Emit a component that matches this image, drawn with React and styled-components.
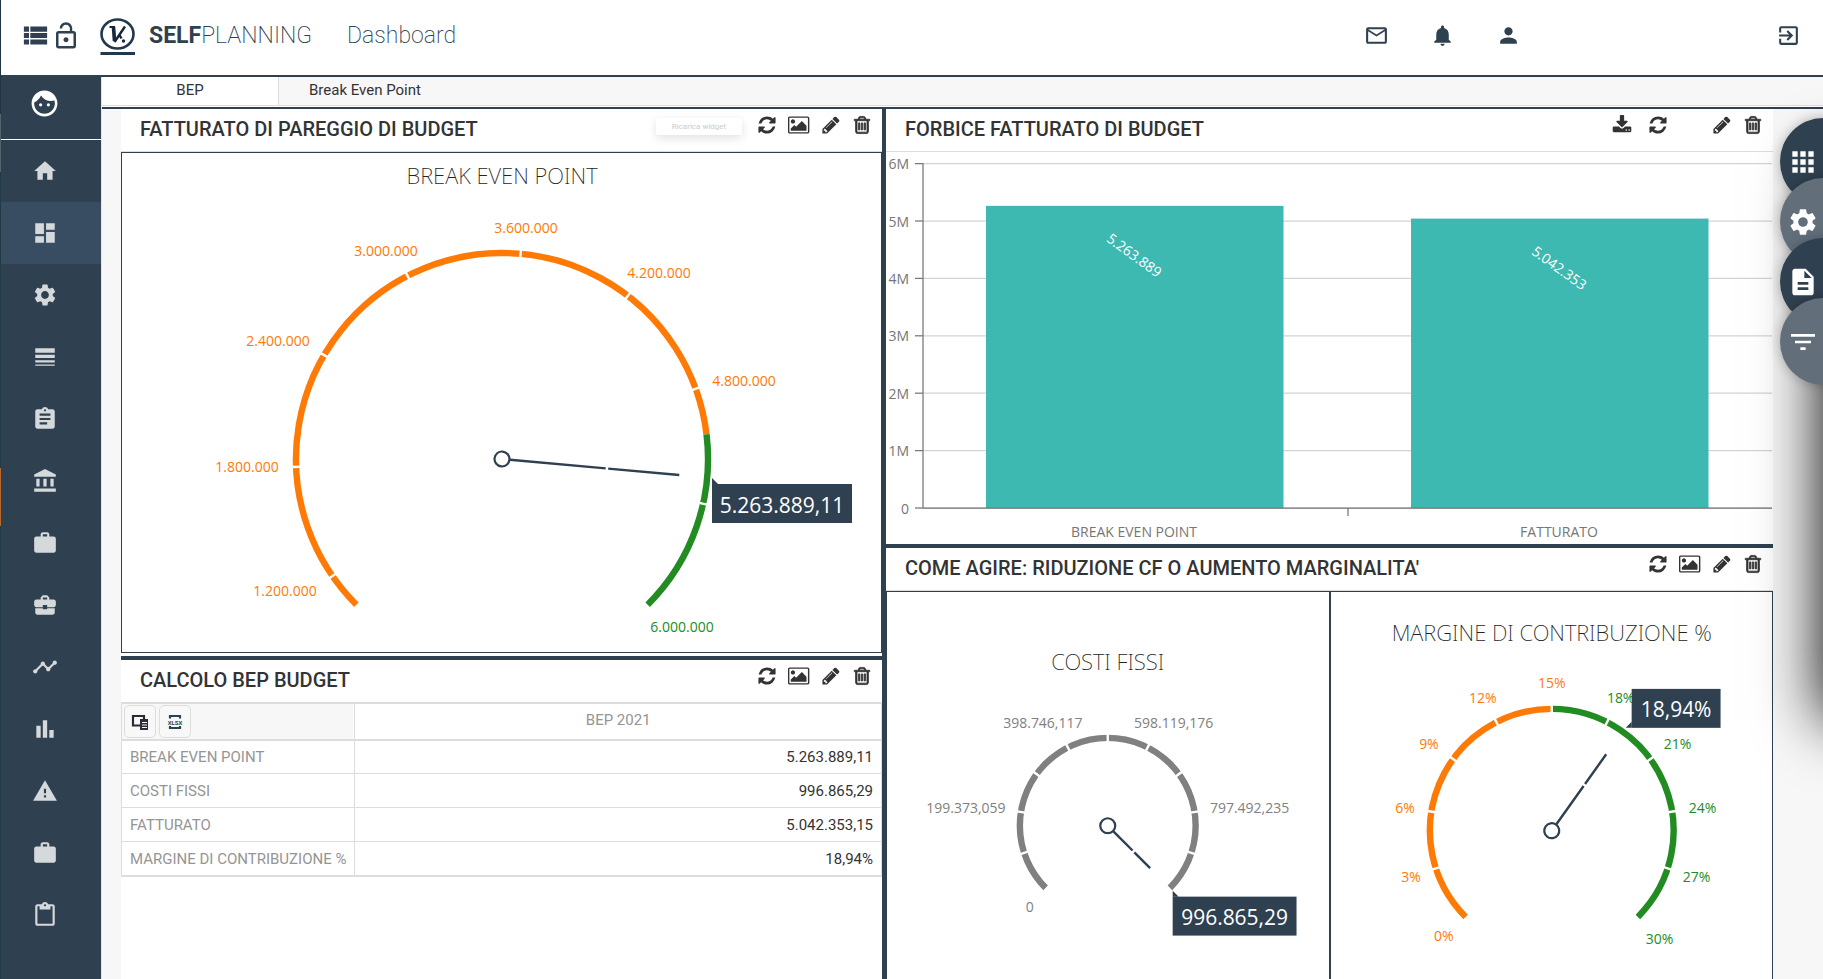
import styled, { createGlobalStyle } from "styled-components";
import {
    MdViewList, MdLockOpen, MdMailOutline, MdNotifications, MdPerson, MdExitToApp, MdFace, MdHome,
    MdDashboard, MdSettings, MdLineWeight, MdAssignment, MdAccountBalance, MdWork, MdBusinessCenter,
    MdTimeline, MdBarChart, MdWarning, MdContentPaste, MdApps, MdDescription, MdFilterList,
} from "react-icons/md";

const NAVY = "#2f4050";
const ORANGE = "#ff7a05";
const GREEN = "#228b22";
const GREY = "#808080";
const CHART_FONT = '"Open Sans", "Noto Sans", sans-serif';

const GlobalStyle = createGlobalStyle`
    * {
        box-sizing: border-box;
    }

    body {
        margin: 0;
        background: #f7f7f7;
        color: #333;
        font-family: Roboto, sans-serif;
        font-size: 15px;
    }
`;

const glyphs = {
    download: "M1344 1344q0-26-19-45t-45-19-45 19-19 45 19 45 45 19 45-19 19-45zm256 0q0-26-19-45t-45-19-45 19-19 45 19 45 45 19 45-19 19-45zm128-224v320q0 40-28 68t-68 28h-1472q-40 0-68-28t-28-68v-320q0-40 28-68t68-28h465l135 136q58 56 136 56t136-56l136-136h464q40 0 68 28t28 68zm-325-569q17 41-14 70l-448 448q-18 19-45 19t-45-19l-448-448q-31-29-14-70 17-39 59-39h256v-448q0-26 19-45t45-19h256q26 0 45 19t19 45v448h256q42 0 59 39z",
    refresh: "M1639 1056q0 5-1 7-64 268-268 434.5t-478 166.5q-146 0-282.5-55t-243.5-157l-129 129q-19 19-45 19t-45-19-19-45v-448q0-26 19-45t45-19h448q26 0 45 19t19 45-19 45l-137 137q71 66 161 102t187 36q134 0 250-65t186-179q11-17 53-117 8-23 30-23h192q13 0 22.5 9.5t9.5 22.5zm25-800v448q0 26-19 45t-45 19h-448q-26 0-45-19t-19-45 19-45l138-138q-148-137-349-137-134 0-250 65t-186 179q-11 17-53 117-8 23-30 23h-199q-13 0-22.5-9.5t-9.5-22.5v-7q65-268 270-434.5t480-166.5q146 0 284 55.5t245 156.5l130-129q19-19 45-19t45 19 19 45z",
    image: "M576 576q0 80-56 136t-136 56-136-56-56-136 56-136 136-56 136 56 56 136zm1024 384v448h-1408v-192l320-320 160 160 512-512zm96-704h-1600q-13 0-22.5 9.5t-9.5 22.5v1216q0 13 9.5 22.5t22.5 9.5h1600q13 0 22.5-9.5t9.5-22.5v-1216q0-13-9.5-22.5t-22.5-9.5zm160 32v1216q0 66-47 113t-113 47h-1600q-66 0-113-47t-47-113v-1216q0-66 47-113t113-47h1600q66 0 113 47t47 113z",
    pencil: "M491 1536l91-91-235-235-91 91v107h128v128h107zm523-928q0-22-22-22-10 0-17 7l-542 542q-7 7-7 17 0 22 22 22 10 0 17-7l542-542q7-7 7-17zm-54-192l416 416-832 832h-416v-416zm683 96q0 53-37 90l-166 166-416-416 166-165q36-38 90-38 53 0 91 38l235 234q37 39 37 91z",
    trash: "M704 736v576q0 14-9 23t-23 9h-64q-14 0-23-9t-9-23v-576q0-14 9-23t23-9h64q14 0 23 9t9 23zm256 0v576q0 14-9 23t-23 9h-64q-14 0-23-9t-9-23v-576q0-14 9-23t23-9h64q14 0 23 9t9 23zm256 0v576q0 14-9 23t-23 9h-64q-14 0-23-9t-9-23v-576q0-14 9-23t23-9h64q14 0 23 9t9 23zm128 724v-948h-896v948q0 22 7 40.5t14.5 27 10.5 8.5h832q3 0 10.5-8.5t14.5-27 7-40.5zm-672-1076h448l-48-117q-7-9-17-11h-317q-10 2-17 11zm928 32v64q0 14-9 23t-23 9h-96v948q0 83-47 143.5t-113 60.5h-832q-66 0-113-58.5t-47-141.5v-952h-96q-14 0-23-9t-9-23v-64q0-14 9-23t23-9h309l70-167q15-37 54-63t79-26h320q40 0 79 26t54 63l70 167h309q14 0 23 9t9 23z",
};

const labels = {
    download: "Scarica",
    refresh: "Ricarica widget",
    image: "Esporta immagine",
    pencil: "Modifica",
    trash: "Elimina",
};

const sidebarItems = [
    { icon: MdHome, name: "Home" },
    { icon: MdDashboard, name: "Dashboard", active: true },
    { icon: MdSettings, name: "Impostazioni" },
    { icon: MdLineWeight, name: "Righe" },
    { icon: MdAssignment, name: "Piani" },
    { icon: MdAccountBalance, name: "Banche" },
    { icon: MdWork, name: "Lavori" },
    { icon: MdBusinessCenter, name: "Aziende" },
    { icon: MdTimeline, name: "Andamento" },
    { icon: MdBarChart, name: "Grafici" },
    { icon: MdWarning, name: "Avvisi" },
    { icon: MdWork, name: "Commesse" },
    { icon: MdContentPaste, name: "Appunti" },
];

const bepRows = [
    ["BREAK EVEN POINT", "5.263.889,11"],
    ["COSTI FISSI", "996.865,29"],
    ["FATTURATO", "5.042.353,15"],
    ["MARGINE DI CONTRIBUZIONE %", "18,94%"],
];

// label coordinates are relative to the centre of the dial
const bepGauge = {
    width: 759, height: 499, cx: 380, cy: 306, radius: 209,
    title: "BREAK EVEN POINT", titleY: 22,
    ranges: [[0, 0.808, ORANGE], [0.808, 1, GREEN]],
    ticks: [0.0384, 0.1586, 0.2788, 0.399, 0.5192, 0.6394, 0.7596, 0.8798],
    value: 0.8525,
    labels: [
        ["1.200.000", -217, 131, ORANGE], ["1.800.000", -255, 7, ORANGE], ["2.400.000", -224, -119, ORANGE],
        ["3.000.000", -116, -209, ORANGE], ["3.600.000", 24, -232, ORANGE], ["4.200.000", 157, -187, ORANGE],
        ["4.800.000", 242, -79, ORANGE], ["6.000.000", 180, 167, GREEN],
    ],
    tip: { x: 210, y: 25, width: 140, height: 39, text: "5.263.889,11", arrow: "0,-6 0,0 6,0" },
};

const fixedGauge = {
    width: 442, height: 388, cx: 221, cy: 234, radius: 91,
    title: "COSTI FISSI", titleY: 70,
    ranges: [[0, 1, GREY]],
    ticks: [0.1, 0.2, 0.3, 0.4, 0.5, 0.6, 0.7, 0.8, 0.9],
    value: 1,
    labels: [
        ["0", -78, 81, GREY], ["199.373,059", -142, -18, GREY], ["398.746,117", -65, -103, GREY],
        ["598.119,176", 66, -103, GREY], ["797.492,235", 142, -18, GREY],
    ],
    tip: { x: 65, y: 71, width: 124, height: 39, text: "996.865,29", arrow: "0,-6 0,0 6,0" },
};

const marginGauge = {
    width: 442, height: 388, cx: 221, cy: 239, radius: 125,
    title: "MARGINE DI CONTRIBUZIONE %", titleY: 41,
    ranges: [[0, 0.5, ORANGE], [0.5, 1, GREEN]],
    ticks: [0.1, 0.2, 0.3, 0.4, 0.5, 0.6, 0.7, 0.8, 0.9],
    value: 0.6313,
    labels: [
        ["0%", -108, 105, ORANGE], ["3%", -141, 46, ORANGE], ["6%", -147, -23, ORANGE],
        ["9%", -123, -87, ORANGE], ["12%", -69, -133, ORANGE], ["15%", 0, -148, ORANGE],
        ["18%", 69, -133, GREEN], ["21%", 126, -87, GREEN], ["24%", 151, -23, GREEN],
        ["27%", 145, 46, GREEN], ["30%", 108, 108, GREEN],
    ],
    tip: { x: 80, y: -142, width: 89, height: 39, text: "18,94%", arrow: "-6,39 0,39 0,33" },
};

const bars = [
    { name: "BREAK EVEN POINT", value: 5.264, text: "5.263.889", x: 100 },
    { name: "FATTURATO", value: 5.042, text: "5.042.353", x: 525 },
];

// 270 degree dial, 0 is bottom left and 1 is bottom right
function polar(t, r) {
    const angle = (t * 270 - 135) * Math.PI / 180;
    return [r * Math.sin(angle), -r * Math.cos(angle)];
}

function arcPath(from, to, r) {
    const [x1, y1] = polar(from, r);
    const [x2, y2] = polar(to, r);
    const large = (to - from) * 270 > 180 ? 1 : 0;
    return `M${x1} ${y1}A${r} ${r} 0 ${large} 1 ${x2} ${y2}`;
}

function Gauge({ data }) {
    const { width, height, cx, cy, radius, tip } = data;
    const needle = radius - 31;

    return (
        <Chart viewBox={`0 0 ${width} ${height}`} role="img" aria-label={data.title}>
            <ChartTitle x={cx} y={data.titleY}>{data.title}</ChartTitle>
            <g transform={`translate(${cx} ${cy})`}>
                {data.ranges.map(([from, to, color]) => (
                    <path key={from} d={arcPath(from, to, radius - 3)} fill="none" stroke={color} strokeWidth="6.4" />
                ))}
                {data.ticks.map((t) => {
                    const [x1, y1] = polar(t, radius - 7);
                    const [x2, y2] = polar(t, radius + 1);
                    return <line key={t} x1={x1} y1={y1} x2={x2} y2={y2} stroke="#fff" strokeWidth="2.4" />;
                })}
                <g transform={`rotate(${data.value * 270 - 135})`} stroke={NAVY} fill="none">
                    <circle r="7.5" strokeWidth="2.2" />
                    <line y1={-8} y2={-needle * 0.585} strokeWidth="2.4" />
                    <line y1={-needle * 0.585 - 2.5} y2={-needle} strokeWidth="2.4" />
                </g>
                {data.labels.map(([text, x, y, color]) => (
                    <ChartLabel key={text} x={x} y={y} $color={color}>{text}</ChartLabel>
                ))}
                <g transform={`translate(${tip.x} ${tip.y})`}>
                    <rect width={tip.width} height={tip.height} fill={NAVY} />
                    <polygon points={tip.arrow} fill={NAVY} />
                    <TipText x={tip.width / 2} y={tip.height / 2 + 1}>{tip.text}</TipText>
                </g>
            </g>
        </Chart>
    );
}

function BarChart() {
    const zero = 356;
    const step = 57.4;

    return (
        <Chart viewBox="0 0 887 392" role="img" aria-label="Forbice fatturato di budget">
            {[0, 1, 2, 3, 4, 5, 6].map((n) => (
                <g key={n}>
                    <line x1="37" x2="886" y1={zero - n * step} y2={zero - n * step} stroke="#d3d3d3" strokeWidth="1.25" />
                    <line x1="29" x2="37" y1={zero - n * step} y2={zero - n * step} stroke="#767676" strokeWidth="1.25" />
                    <AxisLabel x="23" y={zero - n * step}>{n ? `${n}M` : "0"}</AxisLabel>
                </g>
            ))}
            {bars.map((bar) => {
                const top = zero - bar.value * step;
                return (
                    <g key={bar.name}>
                        <rect x={bar.x} y={top} width="297.5" height={zero - top} fill="#3db9b2" />
                        <BarValue transform={`translate(${bar.x + 148.5} ${top + 49}) rotate(36)`}>{bar.text}</BarValue>
                        <ChartLabel x={bar.x + 148} y="379" $color="#767676">{bar.name}</ChartLabel>
                    </g>
                );
            })}
            <path d={`M37 11V${zero}M37 ${zero}H886M462 ${zero}v8`} stroke="#767676" strokeWidth="1.25" fill="none" />
        </Chart>
    );
}

function Widget({ title, tools, tooltip, grow, children }) {
    return (
        <WidgetPanel $grow={grow}>
            <WidgetHeader>
                <WidgetTitle>{title}</WidgetTitle>
                {tooltip && <Hint>{tooltip}</Hint>}
                <Tools>
                    {tools.map((tool, i) => (
                        tool ? (
                            <ToolButton key={tool} $wide={tool === "download"} aria-label={labels[tool]}>
                                <svg viewBox={tool === "image" ? "-32 0 1920 1792" : "0 0 1792 1792"} width={tool === "image" ? 22 : 20} height="20">
                                    <path d={glyphs[tool]} fill="currentColor" stroke="currentColor" strokeWidth={tool === "trash" ? 70 : 0} />
                                </svg>
                            </ToolButton>
                        ) : <ToolGap key={i} />
                    ))}
                </Tools>
            </WidgetHeader>
            {children}
        </WidgetPanel>
    );
}

const tools = ["refresh", "image", "pencil", "trash"];

export default function App() {
    return (
        <Page>
            <GlobalStyle />
            <Edge />
            <Shell>
                <Header>
                    <IconButton $size={31} aria-label="Menu"><MdViewList /></IconButton>
                    <IconButton $size={30} aria-label="Blocca menu"><MdLockOpen /></IconButton>
                    <Brand href="#">
                        <svg width="36" height="38" viewBox="0 0 36 38" fill="none">
                            <ellipse cx="17.500" cy="16" rx="16" ry="14.500" stroke="#22384c" strokeWidth="2.600" />
                            <path d="M9.500 9h5.500" stroke="#14273c" strokeWidth="2" />
                            <path d="M13.500 9l1 14" stroke="#14273c" strokeWidth="3.600" />
                            <path d="M14.500 24L25 8.500M19.500 17l2 3.500" stroke="#14273c" strokeWidth="2.400" />
                            <circle cx="23.500" cy="23" r="1.700" fill="#14273c" />
                            <path d="M0.500 35.500h34.500" stroke="#22384c" strokeWidth="3" />
                        </svg>
                        <span><b>SELF</b>PLANNING</span>
                    </Brand>
                    <PageName>Dashboard</PageName>
                    <HeaderLinks>
                        <IconButton $size={25} aria-label="Messaggi"><MdMailOutline /></IconButton>
                        <IconButton $size={25} aria-label="Notifiche"><MdNotifications /></IconButton>
                        <IconButton $size={25} aria-label="Profilo"><MdPerson /></IconButton>
                    </HeaderLinks>
                    <IconButton $size={25} aria-label="Esci"><MdExitToApp /></IconButton>
                </Header>
                <Body>
                    <Sidebar>
                        <Avatar href="#" aria-label="Utente"><MdFace /></Avatar>
                        {sidebarItems.map(({ icon: Icon, name, active }) => (
                            <SidebarLink key={name} href="#" aria-label={name} $active={active}><Icon /></SidebarLink>
                        ))}
                    </Sidebar>
                    <Main>
                        <Tabs>
                            <Tab $active>BEP</Tab>
                            <Tab>Break Even Point</Tab>
                        </Tabs>
                        <Board>
                            <Column>
                                <Widget title="FATTURATO DI PAREGGIO DI BUDGET" tools={tools} tooltip="Ricarica widget">
                                    <GaugeBox $closed><Gauge data={bepGauge} /></GaugeBox>
                                </Widget>
                                <Widget title="CALCOLO BEP BUDGET" tools={tools} grow>
                                    <BepTable>
                                        <thead>
                                            <tr>
                                                <ToolCell>
                                                    <CellButtons>
                                                        <CellButton aria-label="Campi">
                                                            <svg width="18" height="16" viewBox="0 0 18 16">
                                                                <path d="M10 11.500H2V2h11v4" fill="none" stroke="#2b2b33" strokeWidth="2.200" />
                                                                <path d="M9 5h8v11H9z" fill="#2b2b33" />
                                                                <path d="M11 8.500h5M11 11h5M11 13.500h5" stroke="#f7f7f7" />
                                                            </svg>
                                                        </CellButton>
                                                        <CellButton aria-label="Esporta XLSX">
                                                            <svg width="16" height="16" viewBox="0 0 16 16">
                                                                <path d="M3 4.500V2h10v2.500M3 12v2h10v-2" fill="none" stroke={NAVY} strokeWidth="2.200" />
                                                                <XlsxText x="8" y="10.500">XLSX</XlsxText>
                                                            </svg>
                                                        </CellButton>
                                                    </CellButtons>
                                                </ToolCell>
                                                <ColumnHead>BEP 2021</ColumnHead>
                                            </tr>
                                        </thead>
                                        <tbody>
                                            {bepRows.map(([name, value]) => (
                                                <tr key={name}>
                                                    <RowHead scope="row">{name}</RowHead>
                                                    <ValueCell>{value}</ValueCell>
                                                </tr>
                                            ))}
                                        </tbody>
                                    </BepTable>
                                </Widget>
                            </Column>
                            <Column>
                                <Widget title="FORBICE FATTURATO DI BUDGET" tools={["download", "refresh", null, "pencil", "trash"]}>
                                    <BarChart />
                                </Widget>
                                <Widget title="COME AGIRE: RIDUZIONE CF O AUMENTO MARGINALITA'" tools={tools} grow>
                                    <GaugePair>
                                        <GaugeBox><Gauge data={fixedGauge} /></GaugeBox>
                                        <GaugeBox><Gauge data={marginGauge} /></GaugeBox>
                                    </GaugePair>
                                </Widget>
                            </Column>
                        </Board>
                    </Main>
                </Body>
            </Shell>
            <Drawer />
            <Fabs>
                <Fab aria-label="Applicazioni"><MdApps /></Fab>
                <Fab $light aria-label="Configura"><MdSettings /></Fab>
                <Fab aria-label="Documento"><MdDescription /></Fab>
                <Fab $light aria-label="Filtri"><MdFilterList /></Fab>
            </Fabs>
        </Page>
    );
}

const Page = styled.div`
    position: relative;
    display: flex;
    height: 100vh;
    overflow: hidden;
`;

const Edge = styled.div`
    flex: none;
    width: 1px;
    background: linear-gradient(
        #203646 0 114px,
        #51666c 114px 172px,
        #203a46 172px 468px,
        #b56a2c 468px 526px,
        #203a46 526px
    );
`;

const Shell = styled.div`
    flex: 1;
    min-width: 0;
    display: flex;
    flex-direction: column;
`;

const Header = styled.header`
    flex: none;
    display: flex;
    align-items: center;
    height: 77px;
    padding: 0 22px 4px 19px;
    background: #fff;
    border-bottom: 2px solid ${NAVY};
    color: ${NAVY};
`;

const IconButton = styled.button`
    display: flex;
    padding: 0;
    border: 0;
    background: none;
    color: inherit;
    font-size: ${(props) => props.$size}px;
    cursor: pointer;
`;

const Brand = styled.a`
    display: flex;
    align-items: center;
    gap: 13px;
    margin-left: 19px;
    color: inherit;
    font-size: 23px;
    font-weight: 200;
    text-decoration: none;

    svg {
        margin-top: 3px;
    }

    b {
        font-weight: 700;
    }
`;

const PageName = styled.h1`
    margin: 0 0 0 35px;
    font-size: 23px;
    font-weight: 200;
`;

const HeaderLinks = styled.nav`
    display: flex;
    gap: 41px;
    margin-left: auto;
    margin-right: 255px;
`;

const Body = styled.div`
    flex: 1;
    min-height: 0;
    display: flex;
`;

const Sidebar = styled.nav`
    flex: none;
    width: 101px;
    background: ${NAVY};
    border-right: 1px solid #e3e5e7;
`;

const SidebarLink = styled.a`
    display: flex;
    align-items: center;
    height: 62px;
    padding-left: 31px;
    background: ${(props) => (props.$active ? "#384d61" : "transparent")};
    color: #d5d9dc;
    font-size: 26px;
`;

const Avatar = styled(SidebarLink)`
    height: 63px;
    padding: 0 0 9px 28px;
    border-bottom: 1px solid #fff;
    color: #fff;
    font-size: 31px;
`;

const Main = styled.main`
    flex: 1;
    min-width: 0;
    display: flex;
    flex-direction: column;
`;

const Tabs = styled.div`
    flex: none;
    display: flex;
    height: 32px;
    border-bottom: 2px solid ${NAVY};
    box-shadow: inset 0 -1px #fff, inset 0 -2px #ddd;
`;

const Tab = styled.button`
    min-width: ${(props) => (props.$active ? 177 : 0)}px;
    height: 28px;
    padding: 0 30px 2px;
    border: 0;
    border-right: ${(props) => (props.$active ? "1px solid #ddd" : 0)};
    background: ${(props) => (props.$active ? "#fff" : "transparent")};
    color: #333;
    font: inherit;
`;

const Board = styled.div`
    flex: 1;
    min-height: 0;
    display: grid;
    grid-template-columns: minmax(0, 761fr) minmax(0, 887fr);
    gap: 4px;
    margin: 0 50px 0 19px;
    background: ${NAVY};
`;

const Column = styled.div`
    min-height: 0;
    display: flex;
    flex-direction: column;
    gap: 4px;
`;

const WidgetPanel = styled.section`
    flex: ${(props) => (props.$grow ? "1 0 0" : "none")};
    display: flex;
    flex-direction: column;
    background: #fff;
`;

const WidgetHeader = styled.header`
    flex: none;
    display: flex;
    align-items: center;
    height: 43px;
    padding: 0 10px 0 19px;
    border-bottom: 1px solid #ddd;
`;

const WidgetTitle = styled.h2`
    flex: 1;
    margin: 0;
    padding-bottom: 2px;
    font-size: 20px;
    font-weight: 500;
    line-height: 24px;
`;

const Hint = styled.div`
    width: 86px;
    height: 17px;
    margin: 0 15px 8px 0;
    border-radius: 2px;
    box-shadow: 0 3px 10px rgba(0, 0, 0, 0.12);
    color: #ccc;
    font-size: 8px;
    line-height: 17px;
    text-align: center;
`;

const Tools = styled.div`
    display: flex;
    gap: 11px;
    margin-bottom: 10px;
`;

const ToolButton = styled.button`
    display: flex;
    padding: 0;
    padding-right: ${(props) => (props.$wide ? 5 : 0)}px;
    border: 0;
    background: none;
    color: #333;
    cursor: pointer;
`;

const ToolGap = styled.span`
    width: 22px;
`;

const GaugeBox = styled.div`
    flex: 1;
    min-width: 0;
    margin-bottom: ${(props) => (props.$closed ? 3 : 0)}px;
    border: 1px solid ${NAVY};
    border-bottom-width: ${(props) => (props.$closed ? 1 : 0)}px;
`;

const GaugePair = styled.div`
    flex: 1;
    display: flex;
`;

const Chart = styled.svg`
    display: block;
    width: 100%;
    height: auto;
    font-family: ${CHART_FONT};
`;

const ChartText = styled.text`
    text-anchor: middle;
    dominant-baseline: central;
`;

const ChartTitle = styled(ChartText)`
    fill: #232323;
    font-family: "Noto Sans", "Open Sans", sans-serif;
    font-size: 22px;
    font-weight: 200;
`;

const ChartLabel = styled(ChartText)`
    fill: ${(props) => props.$color};
    font-size: 14px;
`;

const AxisLabel = styled(ChartText)`
    fill: #767676;
    font-size: 14px;
    text-anchor: end;
`;

const BarValue = styled(ChartText)`
    fill: #fff;
    font-size: 14px;
`;

const TipText = styled(ChartText)`
    fill: #fff;
    font-size: 21px;
`;

const XlsxText = styled.text`
    fill: ${NAVY};
    font: 700 6px Roboto, sans-serif;
    text-anchor: middle;
`;

const BepTable = styled.table`
    width: 100%;
    border-collapse: separate;
    border-spacing: 0;
    border: 1px solid #ddd;
    border-bottom-width: 2px;
    color: #959595;

    tbody tr + tr > * {
        height: 34px;
        border-top: 1px solid #ddd;
    }
`;

const ToolCell = styled.td`
    width: 233px;
    height: 37px;
    padding: 0 2px;
    background: #f7f7f7;
    border-right: 1px solid #ddd;
    border-bottom: 2px solid #ddd;
    box-shadow: inset -1px 0 #fff;
`;

const CellButtons = styled.div`
    display: flex;
    gap: 3px;
`;

const CellButton = styled.button`
    display: flex;
    align-items: center;
    justify-content: center;
    width: 32px;
    height: 33px;
    padding: 0;
    border: 1px solid #ddd;
    border-radius: 5px;
    background: #f8f8f8;
`;

const ColumnHead = styled.th`
    padding: 0 0 4px;
    border-bottom: 2px solid #ddd;
    font-weight: 400;
`;

const RowHead = styled.th`
    height: 32px;
    padding: 0 8px;
    border-right: 1px solid #ddd;
    font-weight: 400;
    text-align: left;
    white-space: nowrap;
`;

const ValueCell = styled.td`
    padding: 0 8px;
    color: #333;
    text-align: right;
`;

// sits just outside the right side of the window, only its shadow is seen while closed
const Drawer = styled.aside`
    position: absolute;
    top: 160px;
    left: 100%;
    width: 300px;
    height: 560px;
    box-shadow: 0 0 60px #000;
`;

const Fabs = styled.div`
    position: absolute;
    top: 118px;
    right: -44px;
    display: flex;
    flex-direction: column;
`;

const Fab = styled.button`
    display: flex;
    align-items: center;
    width: 87px;
    height: 87px;
    margin-bottom: -27px;
    padding: 0 0 0 7px;
    border: 0;
    border-radius: 50%;
    background: ${(props) => (props.$light ? "#626f7b" : NAVY)};
    box-shadow: 0 0 12px rgba(0, 0, 0, 0.25);
    color: #fff;
    font-size: 32px;
`;
